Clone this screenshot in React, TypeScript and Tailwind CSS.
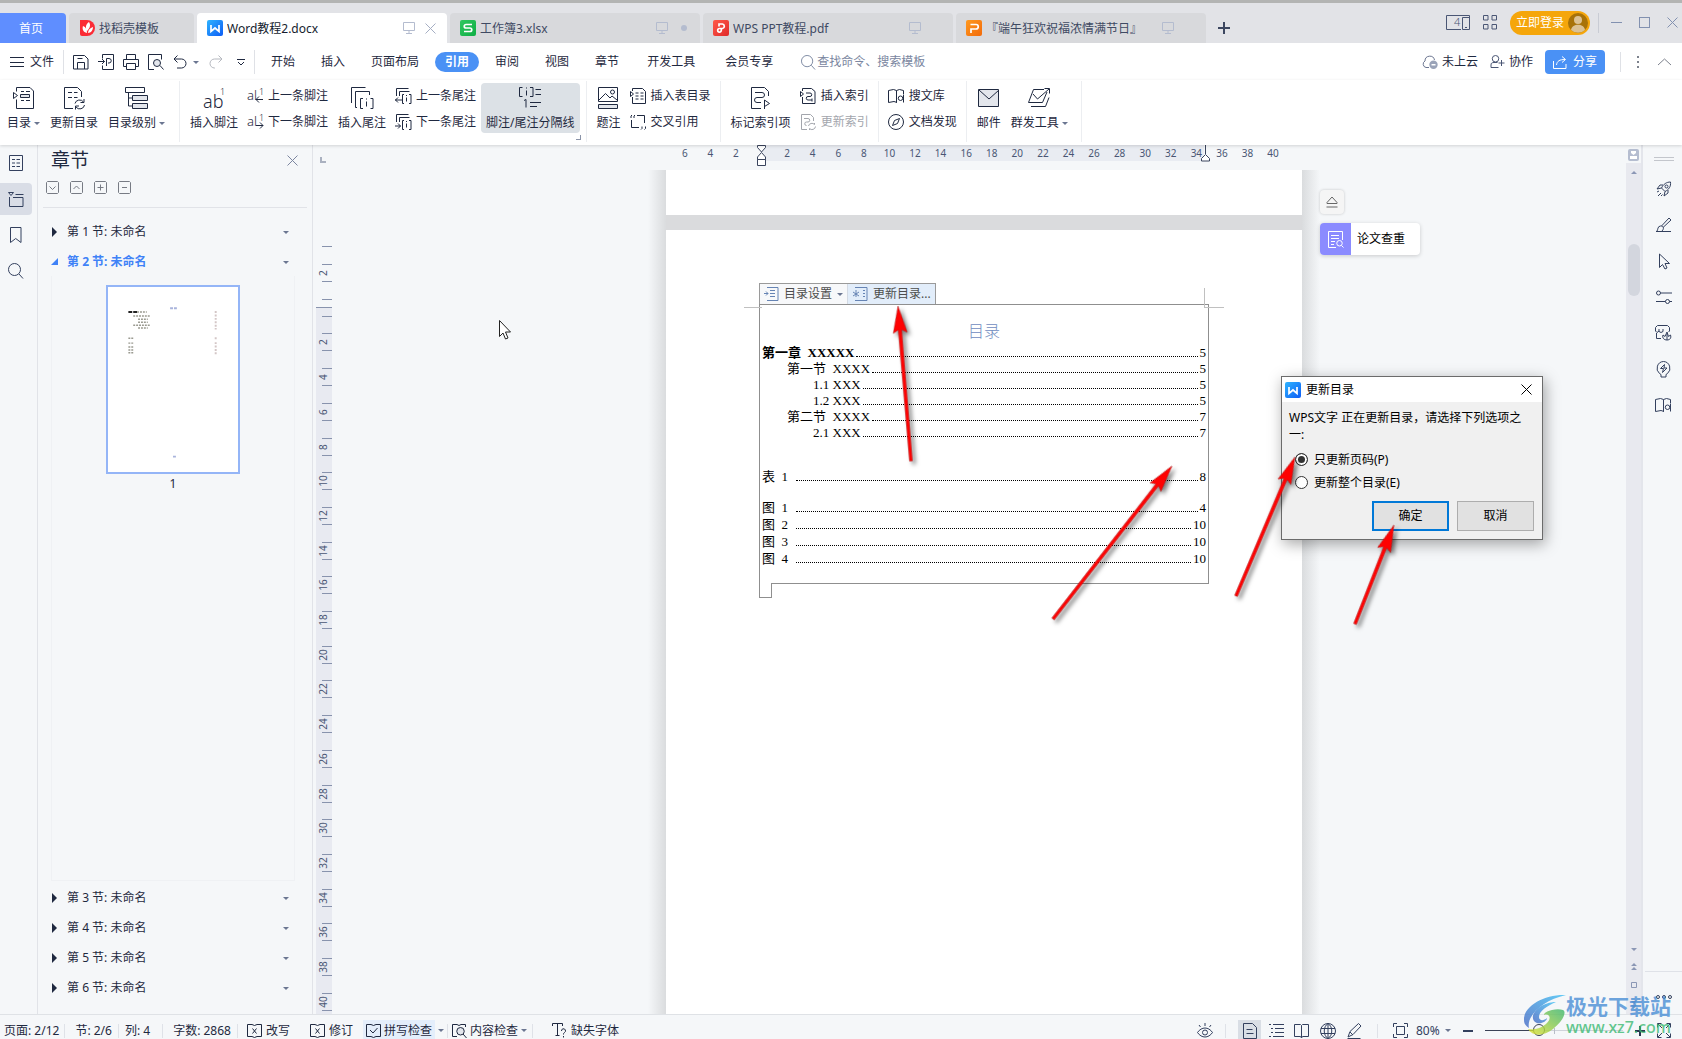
import React from 'react';

const FONT = "font-['Noto_Sans','Noto_Sans_CJK_SC',sans-serif]";
const SERIF = "font-['Liberation_Serif','Noto_Sans_CJK_SC',serif]";

interface Glyph {
  w: number;
  h: number;
  d: string;
  fill?: string;
  solid?: string;
  text?: [number, number, number, string][];
}

const GLYPHS: Record<string, Glyph> = {
  menu: { w: 14, h: 12, d: 'M0 1.5h14M0 6.5h14M0 10.5h14' },
  save: { w: 16, h: 16, d: 'M.5 1.5h11l3.5 3.5v10h-14.5zM4.5 15v-6.5h7V15M4.5 4.5h5' },
  output: { w: 16, h: 16, d: 'M4.5 4.5v-4h11v15h-11v-4M0 7.5h6.5M4 5l2.500 2.500L4 10M8.500 12V4.500h2.500a2.200 2.200 0 0 1 0 4.500H10' },
  print: { w: 16, h: 16, d: 'M3.500 5.500v-5h9v5M3.500 12.500h-3v-7h15v7h-3M3.500 9.500h9v6h-9z' },
  preview: { w: 16, h: 16, d: 'M6 15.500H.500V.500h13v5M12 11.500l3.500 4', fill: 'M9 5.500a3.500 3.500 0 1 0 0 7a3.500 3.500 0 0 0 0-7z' },
  undo: { w: 14, h: 14, d: 'M4.500.5L1 4l3.500 3.500M1 4h7.500a4.500 4.500 0 0 1 0 9H4' },
  redo: { w: 14, h: 14, d: 'M9.500.5L13 4l-3.500 3.500M13 4H5.500a4.500 4.500 0 0 0 0 9H6' },
  more: { w: 8, h: 7, d: 'M0 .5h8M1 3l3 3 3-3' },
  search: { w: 16, h: 16, d: 'M6.500.5a6 6 0 1 0 0 12a6 6 0 0 0 0-12zM11 11l4 4.500' },
  monitor: { w: 12, h: 12, d: 'M.5.5h11v8H.5zM6 8.500v3M3 11.500h6' },
  close: { w: 11, h: 11, d: 'M.5.5l10 10M10.500.5l-10 10' },
  device: { w: 24, h: 15, d: 'M15 14.500H.5V.5h23V3M16.500 2.500h7v12h-7zM19 12.500h2', text: [[8, 11, 11, '4']] },
  apps: { w: 14, h: 15, d: 'M.5.5h4.500v4.500H.5zM9 .5h4.500v4.500H9zM.5 9.500h4.500V14H.5zM9 9.500h4.500V14H9z' },
  cloud: { w: 16, h: 14, d: 'M7 12.500H4a3.500 3.500 0 0 1-1-6.500a4.800 4.800 0 0 1 9.500-1', solid: 'M11.500 5.500a4.200 4.200 0 1 0 0 8.400a4.200 4.200 0 0 0 0-8.400zM9.500 9h4v1.500h-4z' },
  person: { w: 15, h: 14, d: 'M5.500.5a3 3 0 1 0 0 6.500a3 3 0 0 0 0-6.500zM8.500 12.500H1v-2.500c0-2 1-2.500 3-2.500h3.500M11.500 5v6M8.500 8h6' },
  share: { w: 14, h: 13, d: 'M.5 5v7.500h12.500V8M3.500 9c.5-4 3-5.500 8.500-5.500M9 .5l3.500 3L9 6.500' },
  chevron: { w: 15, h: 8, d: 'M1 7l6.500-6L14 7' },
  toc: { w: 22, h: 22, d: 'M3.500 4.500v-4h13.500l3.500 3.500v17.500h-17v-9M.5 5.500l4 3-4 3zM8 4.500h3m2 0h4M8 13.500h3m2 0h4', fill: 'M7.500 7.500h9v3h-9z' },
  tocUpdate: { w: 22, h: 22, d: 'M10 21.500H1.500v-21h13l4 4V10M5 5.500h4m2 0h3.500M5 10.500h4m2 0h3.500M12 16.500a4.700 4.500 0 0 1 8.500-1.500M21 12v3.500h-3.500M21.500 18a4.700 4.500 0 0 1-8.500 2M12.500 22.500V19H16' },
  levels: { w: 24, h: 22, d: 'M.5.5h19v5H.5zM3.500 5.500v13.500h4M3.500 11h4', fill: 'M7.500 8.500h15v5h-15zM7.500 16.500h15v5h-15z' },
  footnote: { w: 22, h: 22, d: '', text: [[0, 21, 18, 'ab'], [17, 8, 9, '1']] },
  footPrev: { w: 17, h: 16, d: 'M16 11.500H9M12 8.500l-3 3 3 3', text: [[0, 12, 13, 'al'], [12, 7, 9, '1']] },
  footNext: { w: 17, h: 16, d: 'M9 11.500h7M13 8.500l3 3-3 3', text: [[0, 12, 13, 'al'], [12, 7, 9, '1']] },
  endnote: { w: 23, h: 22, d: 'M.5 16V.5h14M6 20.500H4.500v-16h14V8M12 11.500H9.500v10H12M19.500 11.500h2.500v10h-2.500M15.500 14.500v5M15.500 11.500v1' },
  endPrev: { w: 17, h: 16, d: 'M1.500 8V.5h12M4.500 8V3.500h10M7.500 12H0M3 9.500l-2.500 2.500L3 14.500M9 6.500H7.500v9H9M14 6.500h2v9h-2M11.500 9.500v4M11.500 7v1' },
  endNext: { w: 17, h: 16, d: 'M1.500 8V.5h12M4.500 8V3.500h10M0 12h5.500M3 9.500L5.500 12 3 14.500M9 6.500H7.500v9H9M14 6.500h2v9h-2M11.500 9.500v4M11.500 7v1' },
  separator: { w: 22, h: 22, d: 'M3.500.5h-3v9h3M11 .5h3v9h-3M7.500 3.500v5M7.500.5v1M16.500 2.500h5.500M16.500 7.500h5.500M5 13.500l2-1v8M11 15.500h11M11 19.500h7' },
  caption: { w: 21, h: 22, d: 'M.5.5h19v14H.5zM1 13l6.500-6.500 4.500 4.500 2-2 5 4M14.500 3a2 2 0 1 0 0 4a2 2 0 0 0 0-4z', fill: 'M.5 17.500h19v4H.5z' },
  tableToc: { w: 17, h: 16, d: 'M2.500 3V.5h10l3 3v12h-13V9M.5 3.500l3 2.500-3 2.500zM5.500 5h3m2 0h3M5.500 8h3m2 0h3M5.500 11h3m2 0h3' },
  crossRef: { w: 17, h: 16, d: 'M7 1.500h7.500V9M1.500 6v7.500H9M1 4V2l1-1M4 4V2l1-1M12 12.500v2l-1 1M15.500 12.500v2l-1 1' },
  markIndex: { w: 22, h: 22, d: 'M11 21.500H1.500v-21h13l4 4V9M5 5.500h7a2.500 2.500 0 0 1 0 5H7a2.500 2.500 0 0 0 0 5h4M14.500 22v-9l5 3.500-5 3' },
  insertIndex: { w: 17, h: 16, d: 'M2.500 3V.5h9l3.500 3v12H2.500V9M.5 3.500l3 2.500-3 2.500zM6 5h4a1.700 1.700 0 0 1 0 3.500H8A1.700 1.700 0 0 0 8 12h4M12 10.500v3' },
  updateIndex: { w: 17, h: 16, d: 'M7 15.500H1.500V.5h9l3 3V7M4 4.500h4a1.700 1.700 0 0 1 0 3.500H6.500a1.700 1.700 0 0 0 0 3.500M8.500 12a3.500 3.500 0 0 1 6-1.500V9M15.500 12.500a3.500 3.500 0 0 1-6 2V16' },
  library: { w: 17, h: 16, d: 'M.5 2.500l5-1 3 1 3-1 4 1V6M8.500 2.500v12M9 14.500l-3-1-5.500 1v-12M12.500 8a2.200 2.200 0 1 0 0 4.500a2.200 2.200 0 0 0 0-4.500zM15.500 6.500v8' },
  compass: { w: 17, h: 16, d: 'M8 .5a7.500 7.500 0 1 0 0 15a7.500 7.500 0 0 0 0-15zM11.500 4.500L9.500 9.500 4.500 11.500l2-5z' },
  mail: { w: 22, h: 20, d: 'M1 2l10 9 10-9', fill: 'M.5 1.500h20v17H.5z' },
  mass: { w: 24, h: 20, d: 'M17 1.500H6.500L1.500 14.500h14L20 4M6 6l4.500 5L22 1M17.500.5h5v5M4 18.500h14.500l3.500-9' },
  list: { w: 15, h: 17, d: 'M.5.5h13v15H.5zM3 4.500h3m1.500 0h3.500M3 8h3m1.500 0h3.500M3 11.500h3m1.500 0h3.500' },
  chapters: { w: 16, h: 15, d: 'M.5.5h5l-2.500 3zM7.500 2.500h8M1.500 5v9.500h13.500v-9H5' },
  bookmark: { w: 12, h: 17, d: 'M.5.5h10.500v15L5.700 11.500.5 15.500z' },
  boxDown: { w: 13, h: 13, d: 'M1.500.5h10l1 1v10l-1 1h-10l-1-1v-10zM3.500 5.500l3 3 3-3' },
  boxUp: { w: 13, h: 13, d: 'M1.500.5h10l1 1v10l-1 1h-10l-1-1v-10zM3.500 8l3-3 3 3' },
  boxPlus: { w: 13, h: 13, d: 'M1.500.5h10l1 1v10l-1 1h-10l-1-1v-10zM3.500 6.500h6M6.500 3.500v6' },
  boxMinus: { w: 13, h: 13, d: 'M1.500.5h10l1 1v10l-1 1h-10l-1-1v-10zM4 6.500h5' },
  eject: { w: 12, h: 12, d: 'M6 1l5 5.500v1H1v-1zM.5 11h11' },
  paper: { w: 16, h: 17, d: 'M8 16.500H.5V.5h14V9M3 4.500h8M3 7.500h8M3 10.500h4M3 13.500h3M11.500 9.500a2.700 2.700 0 1 0 0 5.500a2.700 2.700 0 0 0 0-5.500zM13.500 14.500l2 2' },
  rocket: { w: 16, h: 16, d: 'M14.500 1c-4 0-7 2-9 6l3.500 3.500c4-2 6-5 5.500-9.500zM5.500 7L1 8l3-4h3M9 10.500L8 15l4-3V9M10.500 4a1.500 1.500 0 1 0 0 3a1.500 1.500 0 0 0 0-3zM1 11l2-1M2 15l3-3M5 15l1.500-1.500' },
  brush: { w: 16, h: 16, d: 'M0 14.500h15M1 14c1-1 .5-5 3.500-5s4 2.500 1.500 5M5.500 9l7.500-8 2 2-8 7.500' },
  pointer: { w: 14, h: 17, d: 'M2.500 1v13.500l3-3 2.500 4.500 2-1-2-4.500h4.500z' },
  sliders: { w: 16, h: 15, d: 'M4.500 3H16M0 11.500h9.500M13.500 11.500H16M2.500 1a2 2 0 1 0 0 4a2 2 0 0 0 0-4zM11.500 9.500a2 2 0 1 0 0 4a2 2 0 0 0 0-4z' },
  store: { w: 17, h: 16, d: 'M.5 6V2.500l2-2h10l2 2V6l-1 1M.5 6l1.500 1.500 2-1.500M4 4v2.500l2 1 2-1V4M1.500 8v5.500H6M8 10c-1 3 1 5 4 5 3 0 4.500-2 3.500-5l-2 1.500L12 7l-2 4.500zM12 9v6' },
  bulb: { w: 16, h: 17, d: 'M7.500.5a6.800 6.800 0 0 0-4 12l1.500 1v2.500h5v-2.500l1.500-1a6.800 6.800 0 0 0-4-12zM8.500 3.500l-4 4h3l-1 4 4.500-4.500h-3z' },
  penDoc: { w: 16, h: 16, d: 'M.5 15.500h13M1 14l2-5.500L11.500.5l2.500 2.500-8 8.500zM3 9l3 3' },
  eye: { w: 16, h: 16, d: 'M.5 9.500c4-6 11-6 15 0c-4 6-11 6-15 0zM8 7a2.500 2.500 0 1 0 0 5a2.500 2.500 0 0 0 0-5zM8 0v3M2 2l1.500 2M14 2l-1.500 2' },
  pageView: { w: 14, h: 16, d: 'M.5.5h9l4 4v11H.5zM3.500 6.500h6M3.500 10.500h7' },
  outline: { w: 15, h: 15, d: 'M0 1.500h2M4 1.500h11M2 5.500h2M6 5.500h9M2 9.500h2M6 9.500h9M0 13.500h2M4 13.500h11' },
  book: { w: 16, h: 16, d: 'M.5 1.500h6l1 1 1-1h6v12h-6l-1 1.500-1-1.500h-6zM7.500 2.500v12' },
  globe: { w: 16, h: 16, d: 'M8 .5a7.500 7.500 0 1 0 0 15a7.500 7.500 0 0 0 0-15zM8 .5c-5 3-5 12 0 15c5-3 5-12 0-15zM1 5.500h14M1 10.500h14M8 .5v15' },
  fit: { w: 15, h: 15, d: 'M.5 4V.5H4M11 .5h3.500V4M14.500 11v3.500H11M4 14.500H.5V11M3.500 3.500h8v8h-8z' },
  expand: { w: 14, h: 15, d: 'M9 5l4-4M9.500.5h4v4M5 5L1 1M4.500.5h-4v4M5 10l-4 4M.5 10.500v4h4M9 10l4 4M13.500 10.500v4h-4' },
  revise: { w: 15, h: 15, d: 'M5 1.500H.5v12H5l2.500 1 2.500-1h4.500v-12H10l-2.500 1-2.500-1M5.500 5.500l4 5M9.500 5.500l-4 5' },
  spell: { w: 15, h: 15, d: 'M5 1.500H.5v12H5l2.500 1 2.500-1h4.500v-12H10l-2.500 1-2.500-1M4 7l3 3 4.500-5' },
  content: { w: 15, h: 15, d: 'M5 1.500H.5v12H5M5 1.500l2 1 2-1h4.500V4M11 11l3.500 4', fill: 'M8.500 4.500a3.500 3.500 0 1 0 0 7.500a3.500 3.500 0 0 0 0-7.500z' },
  fontMissing: { w: 15, h: 15, d: 'M.5 3V.5h10V3M5.500.5v12M3.500 12.500h4M9.500 8a2 2 0 1 1 3 1.500c-.8.500-1 1-1 2M11.500 13v1.500' },
  tocSet: { w: 15, h: 14, d: 'M3 .5h11v13H3M6 3.500h5M6 6.500h5M6 9.500h5M0 6.500h4M2 4.500l2 2-2 2' },
  tocRefresh: { w: 16, h: 14, d: 'M3 .5h12v13H3M11 3.500h2M11 6.500h2M11 9.500h2M4 3v7M1 5l6 4M7 5l-6 4' },
};

const Icon = ({ name, className = '' }: { name: string; className?: string }) => {
  const g = GLYPHS[name];
  return (
    <svg width={g.w} height={g.h} viewBox={`0 0 ${g.w} ${g.h}`} className={`shrink-0 overflow-visible ${className}`} aria-hidden="true">
      {g.fill && <path d={g.fill} fill="#e3e6ec" stroke="currentColor" />}
      {g.solid && <path d={g.solid} fill="#9aa3b8" fillRule="evenodd" />}
      <path d={g.d} fill="none" stroke="currentColor" />
      {g.text?.map(([x, y, size, s]) => (
        <text key={s} x={x} y={y} fontSize={size} fontWeight="300" fill="currentColor">{s}</text>
      ))}
    </svg>
  );
};

const Caret = () => (
  <span className="block h-0 w-0 shrink-0 border-x-[3px] border-t-[3px] border-x-transparent border-t-[#6b7691]" />
);

const WpsLogo = ({ kind }: { kind: 'w' | 's' | 'pdf' | 'p' }) => {
  const shapes = {
    w: { from: '#2fb4ff', to: '#0d5cf5', d: 'M4 5v6.500l4-3.500 4 3.500V5' },
    s: { from: '#2fc75f', to: '#0eae45', d: 'M12 4.500H6a1.500 1.500 0 0 0 0 3.500h4a1.700 1.700 0 0 1 0 3.500H4' },
    pdf: { from: '#ff5a4a', to: '#e02a2a', d: 'M6 6.500V4h3.500a2.300 2.300 0 0 1 0 4.500h-3a1.800 1.800 0 1 0 1.800 1.800V8.500' },
    p: { from: '#ff9a1f', to: '#f26a0a', d: 'M4.500 4.500h5.500a2.200 2.200 0 0 1 0 4.500H5V13' },
  };
  const s = shapes[kind];
  return (
    <svg width="16" height="16" viewBox="0 0 16 16" className="shrink-0" aria-hidden="true">
      <defs>
        <linearGradient id={`logo-${kind}`} x1="0" y1="0" x2="1" y2="1">
          <stop offset="0" stopColor={s.from} />
          <stop offset="1" stopColor={s.to} />
        </linearGradient>
      </defs>
      <rect width="16" height="16" rx="2" fill={`url(#logo-${kind})`} />
      <path d={s.d} fill="none" stroke="#fff" strokeWidth="1.7" />
    </svg>
  );
};

interface DocTabProps {
  kind: 'w' | 's' | 'pdf' | 'p';
  title: string;
  active?: boolean;
  tail?: React.ReactNode;
}

const DocTab: React.FC<DocTabProps> = ({ kind, title, active, tail }) => (
  <div
    className={`flex h-[30px] w-[250px] min-w-0 items-center rounded-t-sm pl-2.5 ${
      active ? 'bg-white text-[#141c2e]' : 'bg-[#d8d9dc] text-[#3f4a63]'
    }`}
  >
    <WpsLogo kind={kind} />
    <span className="ml-1 flex-1 truncate pt-0.5">{title}</span>
    <Icon name="monitor" className="text-[#b4bccf]" />
    <span className="flex w-8 items-center justify-center pr-[11px] pl-[10px]">{tail}</span>
  </div>
);

const TitleBar = () => (
  <header className="flex h-[43px] items-end gap-[3px] border-t-[3px] border-[#b3b4b3] bg-[#e2e3e7]">
    <button className="h-[30px] w-[66px] rounded-tr-sm bg-[#5f8eff] pt-px pr-1 text-white">首页</button>
    <button className="flex h-[30px] w-[125px] items-center gap-1 rounded-t-sm bg-[#d8d9dc] pl-[11px] text-[#3f4a63]">
      <svg width="15" height="16" viewBox="0 0 15 16" aria-hidden="true">
        <path d="M0 0h7a8 8 0 0 1 0 16H2a2 2 0 0 1-2-2z" fill="#fb2b35" />
        <path d="M7 13C3 12 2 9 3 6c3 1 4 4 4 7zM7 11C5 7 6 4 9 2c2 3 1 6-2 9zM8 13c0-3 2-5 5-6 0 3-2 6-5 6z" fill="#fff" />
      </svg>
      <span className="pt-0.5">找稻壳模板</span>
    </button>
    <DocTab kind="w" title="Word教程2.docx" active tail={<button aria-label="关闭标签"><Icon name="close" className="block text-[#a5aec3]" /></button>} />
    <DocTab kind="s" title="工作簿3.xlsx" tail={<span className="h-1.5 w-1.5 rounded-full bg-[#b4bccf]" />} />
    <DocTab kind="pdf" title="WPS PPT教程.pdf" />
    <DocTab kind="p" title="『端午狂欢祝福浓情满节日』" />
    <button aria-label="新建" className="mb-[9px] ml-[9px] h-3 w-3">
      <svg width="12" height="12" aria-hidden="true"><path d="M6 0v12M0 6h12" stroke="#3c4760" strokeWidth="2" /></svg>
    </button>
    <div className="ml-auto flex h-10 items-center pb-px text-[#4a5674]">
      <Icon name="device" />
      <Icon name="apps" className="ml-[13px]" />
      <button className="ml-[13px] flex h-6 w-20 items-center justify-between rounded-full bg-[#f5a60b] pr-0.5 pl-1.5 whitespace-nowrap text-white">
        立即登录
        <svg width="20" height="20" viewBox="0 0 20 20" aria-hidden="true">
          <circle cx="10" cy="10" r="10" fill="#a87208" />
          <circle cx="10" cy="7" r="4" fill="#dcc193" />
          <path d="M3 17c1-7 13-7 14 0a10 10 0 0 1-14 0z" fill="#dcc193" />
        </svg>
      </button>
      <span className="ml-2 h-5 w-px bg-[#c9ccd4]" />
      <button aria-label="最小化" className="ml-3 w-[11px] border-t border-[#8291b0]" />
      <button aria-label="最大化" className="ml-[17px] h-[11px] w-[11px] border border-[#8291b0]" />
      <button aria-label="关闭" className="mr-1 ml-[17px]"><Icon name="close" className="block text-[#8291b0]" /></button>
    </div>
  </header>
);

const MENU = ['开始', '插入', '页面布局', '引用', '审阅', '视图', '章节', '开发工具', '会员专享'];

const menuClass = (item: string) => {
  if (item === '引用') return 'mx-[3px] rounded-full bg-[#4a91f5] px-2.5 font-bold text-white';
  if (item === '开发工具' || item === '会员专享') return 'px-[15px]';
  return 'px-[13px]';
};

const MenuBar = () => (
  <nav className="flex h-[37px] items-center pt-px whitespace-nowrap">
    <button className="flex items-center gap-1.5 pl-2.5"><Icon name="menu" />文件</button>
    <span className="mx-[9px] h-6 w-px bg-[#dfe1e6]" />
    <button aria-label="保存"><Icon name="save" /></button>
    <button aria-label="输出" className="ml-[9px]"><Icon name="output" /></button>
    <button aria-label="打印" className="ml-[9px]"><Icon name="print" /></button>
    <button aria-label="打印预览" className="ml-[9px]"><Icon name="preview" /></button>
    <button aria-label="撤销" className="ml-[9px] flex items-center gap-1.5"><Icon name="undo" /><Caret /></button>
    <button aria-label="恢复" className="ml-[10px] text-[#b5b8bf]"><Icon name="redo" /></button>
    <button aria-label="更多" className="ml-[14px]"><Icon name="more" /></button>
    <span className="mr-[3px] ml-[9px] h-6 w-px bg-[#dfe1e6]" />
    {MENU.map((item) => (
      <button key={item} className={`h-5 leading-5 ${menuClass(item)}`}>{item}</button>
    ))}
    <label className="ml-[13px] flex min-w-0 items-center gap-px text-[#7a86a0]">
      <Icon name="search" className="h-[15px] w-[15px]" />
      <input aria-label="查找" placeholder="查找命令、搜索模板" className="w-32 min-w-0 bg-transparent outline-none placeholder:text-[#7a86a0]" />
    </label>
    <div className="ml-auto flex items-center">
      <button className="flex items-center gap-1"><Icon name="cloud" className="text-[#6b7590]" />未上云</button>
      <button className="ml-3 flex items-center gap-1"><Icon name="person" className="text-[#4a5674]" />协作</button>
      <button className="ml-3 flex h-6 w-[60px] items-center justify-center gap-1.5 rounded bg-[#4a91f5] text-white"><Icon name="share" />分享</button>
      <span className="ml-[15px] h-5 w-px bg-[#dfe1e6]" />
      <button aria-label="选项" className="ml-4 flex flex-col gap-[3px]">
        <i className="h-0.5 w-0.5 bg-[#7d828d]" /><i className="h-0.5 w-0.5 bg-[#7d828d]" /><i className="h-0.5 w-0.5 bg-[#7d828d]" />
      </button>
      <button aria-label="收起功能区" className="mr-[10px] ml-[18px]"><Icon name="chevron" className="text-[#7d828d]" /></button>
    </div>
  </nav>
);

interface ToolProps {
  icon: string;
  label: string;
  caret?: boolean;
  active?: boolean;
  disabled?: boolean;
}

const BigTool: React.FC<ToolProps> = ({ icon, label, caret, active }) => (
  <button className={`flex h-[50px] flex-col items-center gap-1.5 rounded-sm px-[5px] pt-1 ${active ? 'bg-[#dce1e6]' : ''}`}>
    <Icon name={icon} className="h-[22px]" />
    <span className="flex items-center gap-[3px] leading-4 whitespace-nowrap">{label}{caret && <Caret />}</span>
  </button>
);

const SmallTool: React.FC<ToolProps> = ({ icon, label, disabled }) => (
  <button disabled={disabled} className={`flex h-[26px] items-center gap-1 px-1 whitespace-nowrap ${disabled ? 'text-[#a3a6ad]' : ''}`}>
    <Icon name={icon} />{label}
  </button>
);

const Group = ({ children, className = 'px-[5px]' }: { children: React.ReactNode; className?: string }) => (
  <div className={`relative flex h-[61px] border-r border-[#eceef1] pt-0.5 ${className}`}>{children}</div>
);

const Ribbon = () => (
  <div className="relative z-10 flex h-[65px] bg-white pt-px shadow-[0_1px_3px_rgba(0,0,0,0.15)]">
    <Group className="pr-[9px] pl-0.5">
      <BigTool icon="toc" label="目录" caret />
      <BigTool icon="tocUpdate" label="更新目录" />
      <BigTool icon="levels" label="目录级别" caret />
    </Group>
    <Group className="pr-1.5 pl-[5px]">
      <BigTool icon="footnote" label="插入脚注" />
      <div className="pr-px"><SmallTool icon="footPrev" label="上一条脚注" /><SmallTool icon="footNext" label="下一条脚注" /></div>
      <BigTool icon="endnote" label="插入尾注" />
      <div className="pr-px"><SmallTool icon="endPrev" label="上一条尾注" /><SmallTool icon="endNext" label="下一条尾注" /></div>
      <BigTool icon="separator" label="脚注/尾注分隔线" active />
      <span className="absolute right-[5px] bottom-0.5 h-[5px] w-[5px] border-r border-b border-[#8a93a8]" />
    </Group>
    <Group>
      <BigTool icon="caption" label="题注" />
      <div><SmallTool icon="tableToc" label="插入表目录" /><SmallTool icon="crossRef" label="交叉引用" /></div>
    </Group>
    <Group>
      <BigTool icon="markIndex" label="标记索引项" />
      <div><SmallTool icon="insertIndex" label="插入索引" /><SmallTool icon="updateIndex" label="更新索引" disabled /></div>
    </Group>
    <Group>
      <div><SmallTool icon="library" label="搜文库" /><SmallTool icon="compass" label="文档发现" /></div>
    </Group>
    <Group className="pr-2 pl-[5px]">
      <BigTool icon="mail" label="邮件" />
      <BigTool icon="mass" label="群发工具" caret />
    </Group>
  </div>
);

const LeftRail = () => (
  <div className="flex w-[38px] shrink-0 flex-col gap-1 border-r border-[#e1e3e8] pt-0.5 text-[#33405e]">
    {['list', 'chapters', 'bookmark', 'search'].map((name) => (
      <button key={name} aria-label={name} className={`flex h-8 w-8 items-center justify-center rounded-r-sm ${name === 'chapters' ? 'bg-[#d9dde6]' : ''}`}>
        <Icon name={name} />
      </button>
    ))}
  </div>
);

const SectionRow = ({ n, open }: { n: number; open?: boolean }) => (
  <button className={`flex h-[30px] w-full shrink-0 items-center pt-0.5 pr-[23px] pl-[13px] ${open ? 'font-bold text-[#3f82f7]' : ''}`}>
    <svg width="8" height="10" viewBox="0 0 8 10" aria-hidden="true">
      {open ? <path d="M7 1v7H0z" fill="currentColor" /> : <path d="M1 0v10l5-5z" fill="currentColor" />}
    </svg>
    <span className="ml-2 flex-1 text-left">第 {n} 节: 未命名</span>
    <Caret />
  </button>
);

const Thumbnail = () => (
  <svg width="134" height="189" viewBox="0 0 134 189" className="shrink-0 border-2 border-[#94b5f7] bg-white" aria-hidden="true">
    <path d="M64 21h8M67 174h4" stroke="#a9b4dc" strokeWidth="2" strokeDasharray="3 1" />
    <path d="M21 25h9" stroke="#222" strokeWidth="2" strokeDasharray="4 1" />
    <path d="M30 25h10M26 29h17M31 32.500h10M31 35.500h10M26 38.500h17M31 41.500h10M21 52h5M21 57h5M21 61h5M21 64h5M21 67h5" stroke="#9a9a90" strokeWidth="1.5" strokeDasharray="2 1" />
    <path d="M111 24v19M111 51v2M111 56v13" stroke="#d3c6c6" strokeWidth="2" strokeDasharray="2 1.500" />
  </svg>
);

const SectionPanel = () => (
  <aside className="flex w-[275px] shrink-0 flex-col border-r border-[#e1e3e8]">
    <div className="flex h-[30px] items-center justify-between pr-[14px] pl-[13px]">
      <h2 className="pt-0.5 text-[19px]">章节</h2>
      <button aria-label="关闭面板"><Icon name="close" className="block text-[#7c86a0]" /></button>
    </div>
    <div className="mx-[5px] flex h-[33px] items-start gap-[11px] border-b border-[#e1e3e8] pt-1.5 pl-[3px] text-[#777b84]">
      <button aria-label="全部展开"><Icon name="boxDown" className="block" /></button>
      <button aria-label="全部折叠"><Icon name="boxUp" className="block" /></button>
      <button aria-label="新增节"><Icon name="boxPlus" className="block" /></button>
      <button aria-label="删除节"><Icon name="boxMinus" className="block" /></button>
    </div>
    <div className="flex min-h-0 flex-1 flex-col pt-2 pb-[12px]">
      <SectionRow n={1} />
      <SectionRow n={2} open />
      <div className="mr-[17px] mb-px ml-[13px] flex min-h-0 flex-1 flex-col items-center border border-t-0 border-[#eff1f4] pt-[9px]">
        <Thumbnail />
        <span className="mt-0.5 leading-4">1</span>
      </div>
      <SectionRow n={3} />
      <SectionRow n={4} />
      <SectionRow n={5} />
      <SectionRow n={6} />
    </div>
  </aside>
);

const V_MARKS = [-4, -2, 0, ...Array.from({ length: 20 }, (_, i) => (i + 1) * 2)];

const VerticalRuler = () => (
  <div className="ml-[3px] w-4 shrink-0 overflow-hidden text-[10px] text-[#4a5674]">
    <div className="h-[76px] pt-3 pl-1"><span className="block h-1.5 w-1.5 border-b-2 border-l-2 border-[#aab1c0]" /></div>
    <div className="flex h-[798px] flex-col bg-[linear-gradient(to_bottom,transparent_87px,#e8eaf1_87px)]">
      {V_MARKS.map((v) => (
        <div key={v} className="flex flex-1 flex-col items-end justify-center">
          <i className={`h-px w-2.5 ${v === -4 ? '' : 'bg-[#8893ad]'}`} />
          <span className="flex h-4 w-full items-center">
            {v === 0 && <i className="h-px w-full bg-[#8893ad]" />}
            {(v > 0 || v === -2) && <span className="flex h-4 w-4 -rotate-90 items-center justify-center">{Math.abs(v)}</span>}
          </span>
          <i className="h-px w-2.5 bg-[#8893ad]" />
        </div>
      ))}
    </div>
  </div>
);

const H_MARKS = Array.from({ length: 24 }, (_, i) => (i - 3) * 2);

const HorizontalRuler = () => (
  <div className="flex h-[25px] justify-center text-[10px] leading-4 text-[#4a5674]">
    <div className="relative flex h-4 w-[614px] bg-[linear-gradient(to_right,transparent_89px,#e9ecf2_89px,#e9ecf2_532px,transparent_532px)]">
      {H_MARKS.map((v) => (
        <span key={v} className="flex-1 text-center">{v === 0 ? '' : Math.abs(v)}</span>
      ))}
      <svg width="9" height="22" viewBox="0 0 9 22" className="absolute top-0 left-[85px]" aria-hidden="true">
        <path d="M.5.5h8v2l-4 4.500-4-4.500zM4.500 7.500l4 4.500v2.500h-8V12zM.5 14.500h8v6h-8z" fill="#fff" stroke="#3b455e" />
      </svg>
      <svg width="9" height="17" viewBox="0 0 9 17" className="absolute top-0 left-[529px]" aria-hidden="true">
        <path d="M4.500 0v9M4.500 9.500l4 4v2.500h-8v-2.500z" fill="#fff" stroke="#3b455e" />
      </svg>
    </div>
  </div>
);

interface Entry {
  label: string;
  page: number;
  level: 0 | 1 | 2 | 3;
}

const CHAPTERS: Entry[] = [
  { label: '第一章  XXXXX', page: 5, level: 1 },
  { label: '第一节  XXXX', page: 5, level: 2 },
  { label: '1.1 XXX', page: 5, level: 3 },
  { label: '1.2 XXX', page: 5, level: 3 },
  { label: '第二节  XXXX', page: 7, level: 2 },
  { label: '2.1 XXX', page: 7, level: 3 },
];

const FIGURES: Entry[] = [
  { label: '图  1', page: 4, level: 0 },
  { label: '图  2', page: 10, level: 0 },
  { label: '图  3', page: 10, level: 0 },
  { label: '图  4', page: 10, level: 0 },
];

const LEVEL_CLASS = ['w-8', 'font-bold', 'pl-[25px]', 'pl-[51px]'];

const TocLine = ({ entry, tall }: { entry: Entry; tall?: boolean }) => (
  <li className={tall ? 'h-[17px]' : 'h-4'}>
    <a href="#toc" className="flex items-baseline gap-0.5 leading-4 whitespace-pre">
      <span className={LEVEL_CLASS[entry.level]}>{entry.label}</span>
      <span className="flex-1 border-b border-dotted border-black" />
      <span>{entry.page}</span>
    </a>
  </li>
);

const DocumentPage = () => (
  <article className="flex-1 bg-white px-[93px] pt-[53px]">
    <div className="flex h-[21px] w-fit border border-b-0 border-[#9a9a9a] text-[#4d4d4d]">
      <button className="flex items-center gap-[5px] bg-[#f7f8fa] px-1 whitespace-nowrap">
        <Icon name="tocSet" className="text-[#6684b4]" />目录设置<Caret />
      </button>
      <button className="flex items-center gap-[5px] border-l border-[#d4dae3] bg-[#e2edfa] px-1 whitespace-nowrap">
        <Icon name="tocRefresh" className="text-[#6684b4]" />更新目录...
      </button>
    </div>
    <div className={`relative border border-[#8f8f8f] px-0.5 pt-[15px] pb-[15px] text-[13px] text-black ${SERIF}`}>
      <span className="absolute top-0.5 -left-4 w-[18px] border-t border-[#c0c0c0]" />
      <span className="absolute -top-[17px] right-[3px] h-5 border-l border-[#c0c0c0]" />
      <span className="absolute top-0.5 -right-4 w-5 border-t border-[#c0c0c0]" />
      <h1 className="h-6 text-center text-base leading-6 font-light text-[#6f8cc0]">目录</h1>
      <ol className="mt-px">{CHAPTERS.map((e) => <TocLine key={e.label} entry={e} />)}</ol>
      <ol className="mt-7"><TocLine entry={{ label: '表  1', page: 8, level: 0 }} /></ol>
      <ol className="mt-[15px]">{FIGURES.map((e) => <TocLine key={e.label} entry={e} tall />)}</ol>
    </div>
    <div className="relative -mt-px h-[15px] w-[13px] border border-t-0 border-[#8f8f8f] bg-white" />
  </article>
);

const Workspace = () => (
  <main className="relative flex min-w-0 flex-1 flex-col">
    <HorizontalRuler />
    <div className="grid min-h-0 flex-1 grid-cols-[1fr_18px_636px_18px_1fr] pl-2.5">
      <div />
      <div className="bg-linear-to-r from-[#f5f7f9] to-[#dadcde]" />
      <div className="flex flex-col bg-[#dadbdd]">
        <div className="mb-[15px] h-[45px] bg-white" />
        <DocumentPage />
      </div>
      <div className="bg-linear-to-l from-[#f5f7f9] to-[#dadcde]" />
      <div className="flex flex-col items-start gap-[9px] pt-5">
        <button aria-label="收起" className="flex h-6 w-6 items-center justify-center rounded-sm bg-[#f5f5f5] text-[#666] shadow-[0_0_3px_rgba(0,0,0,0.2)]">
          <Icon name="eject" />
        </button>
        <button className="flex h-8 items-center overflow-hidden rounded bg-white pr-[15px] text-black shadow-[0_1px_4px_rgba(0,0,0,0.18)]">
          <span className="mr-1.5 flex h-8 w-[31px] items-center justify-center bg-[#8b8bff] text-white"><Icon name="paper" /></span>
          论文查重
        </button>
      </div>
    </div>
  </main>
);

const ScrollBar = () => (
  <div className="flex w-[17px] shrink-0 flex-col items-center border-r-2 border-[#e3e5eb] bg-[#e8e9ef] text-[#8b97b5]">
    <div className="flex h-[18px] w-full items-center justify-center bg-[#f5f7f9] pt-0.5">
      <svg width="11" height="12" viewBox="0 0 11 12" aria-hidden="true">
        <rect width="11" height="12" rx="2" fill="#b5bdd0" />
        <path d="M3 2h5v2L5.500 6 3 4zM2 7h7v3H2z" fill="#fff" />
      </svg>
    </div>
    <svg width="6" height="3" className="mt-2" aria-hidden="true"><path d="M0 3l3-3 3 3z" fill="currentColor" /></svg>
    <div className="mt-[70px] h-[52px] w-3 rounded-full bg-[#d3d6de]" />
    <svg width="6" height="60" className="mt-auto mb-1.5" aria-hidden="true">
      <path d="M0 0h6L3 3zM0 18l3-3 3 3zM0 22l3-3 3 3zM0 53l3 3 3-3zM0 57l3 3 3-3z" fill="currentColor" />
      <path d="M.5 34.500h5v5h-5z" fill="none" stroke="currentColor" />
    </svg>
  </div>
);

const RightRail = () => (
  <div className="flex w-[39px] shrink-0 flex-col items-center pt-3 pl-0.5 text-[#33405e]">
    <span className="mb-[10px] h-1 w-5 border-y border-[#c3c6cc]" />
    {['rocket', 'brush', 'pointer', 'sliders', 'store', 'bulb', 'library'].map((name) => (
      <button key={name} aria-label={name} className="flex h-9 w-9 items-center justify-center"><Icon name={name} /></button>
    ))}
    <button aria-label="更多工具" className="mt-auto flex h-[43px] w-full items-center justify-center gap-[2px] border-t border-[#dfe2e8] pt-2">
      <i className="h-1 w-1 rounded-full border border-[#33405e]" /><i className="h-1 w-1 rounded-full border border-[#33405e]" /><i className="h-1 w-1 rounded-full border border-[#33405e]" />
    </button>
  </div>
);

const Bar = ({ className }: { className: string }) => <span className={`h-[14px] w-px shrink-0 bg-[#dfe2e8] ${className}`} />;

const StatusBar = () => (
  <footer className="relative flex h-[25px] shrink-0 items-center border-t border-[#dfe2e6] pt-[7px] whitespace-nowrap">
    <span className="pl-1">页面: 2/12</span>
    <Bar className="mr-[10px] ml-[5px]" />
    <span>节: 2/6</span>
    <Bar className="mx-1.5" />
    <span>列: 4</span>
    <Bar className="mr-[10px] ml-3" />
    <span>字数: 2868</span>
    <Bar className="mr-[9px] ml-1.5" />
    <button className="flex items-center gap-1"><Icon name="revise" />改写</button>
    <button className="ml-5 flex items-center gap-1"><Icon name="revise" />修订</button>
    <button className="ml-2.5 flex h-[22px] items-center gap-[3px] bg-[#e4eefb] px-[3px]"><Icon name="spell" />拼写检查</button>
    <span className="ml-[3px]"><Caret /></span>
    <Bar className="mr-1 ml-[3px]" />
    <button className="flex items-center gap-[3px]"><Icon name="content" />内容检查<Caret /></button>
    <Bar className="mr-[19px] ml-[5px]" />
    <button className="flex items-center gap-1"><Icon name="fontMissing" />缺失字体</button>
    <div className="ml-auto flex items-center text-[#33405e]">
      <button aria-label="护眼模式"><Icon name="eye" /></button>
      <Bar className="mx-3" />
      <button aria-label="页面视图" className="flex h-[22px] w-[23px] items-center justify-center bg-[#d9dee5]"><Icon name="pageView" /></button>
      <button aria-label="大纲" className="ml-2"><Icon name="outline" /></button>
      <button aria-label="阅读版式" className="ml-[10px]"><Icon name="book" /></button>
      <button aria-label="Web版式" className="ml-[10px]"><Icon name="globe" /></button>
      <button aria-label="写作模式" className="ml-[11px]"><Icon name="penDoc" /></button>
      <Bar className="mr-[15px] ml-[14px]" />
      <button aria-label="最佳显示比例"><Icon name="fit" /></button>
      <button className="ml-2 flex w-[35px] items-center justify-between">80%<Caret /></button>
      <button aria-label="缩小" className="ml-3 h-0.5 w-2.5 bg-[#33405e]" />
      <span className="relative ml-3 flex w-[138px] items-center">
        <input
          type="range"
          aria-label="缩放"
          defaultValue={38}
          className="h-3 w-full appearance-none bg-transparent [&::-webkit-slider-runnable-track]:h-px [&::-webkit-slider-runnable-track]:bg-[linear-gradient(to_right,#3b4256_39%,#cfd3da_39%)] [&::-webkit-slider-thumb]:-mt-[6px] [&::-webkit-slider-thumb]:h-3 [&::-webkit-slider-thumb]:w-3 [&::-webkit-slider-thumb]:appearance-none [&::-webkit-slider-thumb]:rounded-full [&::-webkit-slider-thumb]:border [&::-webkit-slider-thumb]:border-[#3b4256] [&::-webkit-slider-thumb]:bg-[#f5f7f9]"
        />
        <i className="absolute left-1/2 h-1.5 w-px bg-[#b8bdc8]" />
      </span>
      <button aria-label="放大" className="ml-3">
        <svg width="10" height="10" aria-hidden="true"><path d="M5 0v10M0 5h10" stroke="#2b3550" strokeWidth="2" /></svg>
      </button>
      <button aria-label="全屏" className="mr-[11px] ml-3"><Icon name="expand" /></button>
    </div>
  </footer>
);

const UpdateRadio = ({ checked }: { checked?: boolean }) => (
  <input
    type="radio"
    name="update"
    defaultChecked={checked}
    className="h-[13px] w-[13px] appearance-none rounded-full border border-[#333] bg-white checked:bg-[#333] checked:shadow-[inset_0_0_0_2px_white]"
  />
);

const UpdateDialog = () => (
  <div role="dialog" aria-label="更新目录" className="absolute top-[376px] left-[1281px] z-20 w-[262px] border border-[#6b6b6b] bg-[#f0f0f0] text-black shadow-[2px_4px_14px_rgba(0,0,0,0.35)]">
    <div className="flex h-[25px] items-center gap-[5px] bg-white pr-[10px] pl-[3px]">
      <WpsLogo kind="w" />
      <span className="flex-1">更新目录</span>
      <button aria-label="关闭对话框"><Icon name="close" className="block" /></button>
    </div>
    <fieldset aria-label="更新选项" className="px-[7px] pt-[7px]">
      <p className="leading-[17px]">WPS文字 正在更新目录，请选择下列选项之一:</p>
      <label className="mt-[5px] ml-1.5 flex h-[23px] items-center gap-1.5"><UpdateRadio checked />只更新页码(P)</label>
      <label className="ml-1.5 flex h-[23px] items-center gap-1.5"><UpdateRadio />更新整个目录(E)</label>
    </fieldset>
    <div className="flex justify-end gap-2 pt-[7px] pr-2 pb-2">
      <button className="h-[30px] w-[77px] border-2 border-[#0078d7] bg-[#e1e1e1]">确定</button>
      <button className="h-[30px] w-[77px] border border-[#adadad] bg-[#e1e1e1]">取消</button>
    </div>
  </div>
);

// tail x/y, tip x/y
const ARROWS = [
  [911, 461, 898, 306],
  [1053, 619, 1172, 466],
  [1236, 596, 1295, 457],
  [1355, 624, 1394, 525],
];

const Annotations = () => (
  <svg width="1682" height="1039" viewBox="0 0 1682 1039" className="pointer-events-none absolute top-0 left-0 z-30" aria-hidden="true">
    <path d="M499.500 320.500v16l3.500-3.500 2.500 6 2.500-1-2.500-6h5z" fill="#fff" stroke="#222" />
    <g className="drop-shadow-[3px_3px_2px_rgba(0,0,0,0.5)]">
      {ARROWS.map(([x1, y1, x2, y2]) => {
        const len = Math.hypot(x2 - x1, y2 - y1);
        const angle = (Math.atan2(y2 - y1, x2 - x1) * 180) / Math.PI;
        return (
          <path
            key={x1}
            transform={`translate(${x2} ${y2}) rotate(${angle})`}
            d={`M0 0L-27-7L-24-1.800L${-len}-1.400V1.400L-24 1.800L-27 7z`}
            fill="#fe0202"
            stroke="#a01010"
            strokeWidth="0.400"
          />
        );
      })}
    </g>
  </svg>
);

const Watermark = () => (
  <div className="pointer-events-none absolute right-[11px] bottom-0.5 z-30 flex items-center opacity-80">
    <svg width="43" height="43" viewBox="0 0 43 43" aria-hidden="true">
      <defs>
        <linearGradient id="swirl-blue" x1="0" y1="1" x2="1" y2="0">
          <stop offset="0" stopColor="#4468c4" />
          <stop offset="1" stopColor="#3fc0f5" />
        </linearGradient>
        <linearGradient id="swirl-green" x1="1" y1="0" x2="0" y2="1">
          <stop offset="0" stopColor="#3ab56d" />
          <stop offset="1" stopColor="#e3e32c" />
        </linearGradient>
      </defs>
      <path d="M43 1C22 0 0 12 1 26c0 4 2 6 5 8C3 22 20 6 43 1z" fill="url(#swirl-blue)" />
      <path d="M33 8C18 8 6 20 11 27c4 5 13 1 13-3c-3 3-8 3-8-1c0-6 8-11 17-15z" fill="url(#swirl-blue)" />
      <path d="M29 16c-5 1-8 3-8 5c6-2 8 4 2 9C17 35 9 36 5 35c4 7 15 8 25 0c10-8 14-17 10-19c-3-1-7-1-11 0z" fill="url(#swirl-green)" />
    </svg>
    <div className="flex flex-col pt-0.5">
      <span className="text-[21px] leading-[22px] font-bold text-[#4a8fd6]">极光下载站</span>
      <span className="text-[16px] leading-[20px] font-medium text-[#3dbb74]">www.xz7.com</span>
    </div>
  </div>
);

const App: React.FC = () => (
  <div className={`relative flex h-screen flex-col overflow-hidden bg-[#f5f7f9] text-xs text-[#1f2940] ${FONT}`}>
    <TitleBar />
    <div className="bg-white"><MenuBar /></div>
    <Ribbon />
    <div className="flex min-h-0 flex-1">
      <LeftRail />
      <SectionPanel />
      <VerticalRuler />
      <Workspace />
      <ScrollBar />
      <RightRail />
    </div>
    <StatusBar />
    <UpdateDialog />
    <Annotations />
    <Watermark />
  </div>
);

export default App;
